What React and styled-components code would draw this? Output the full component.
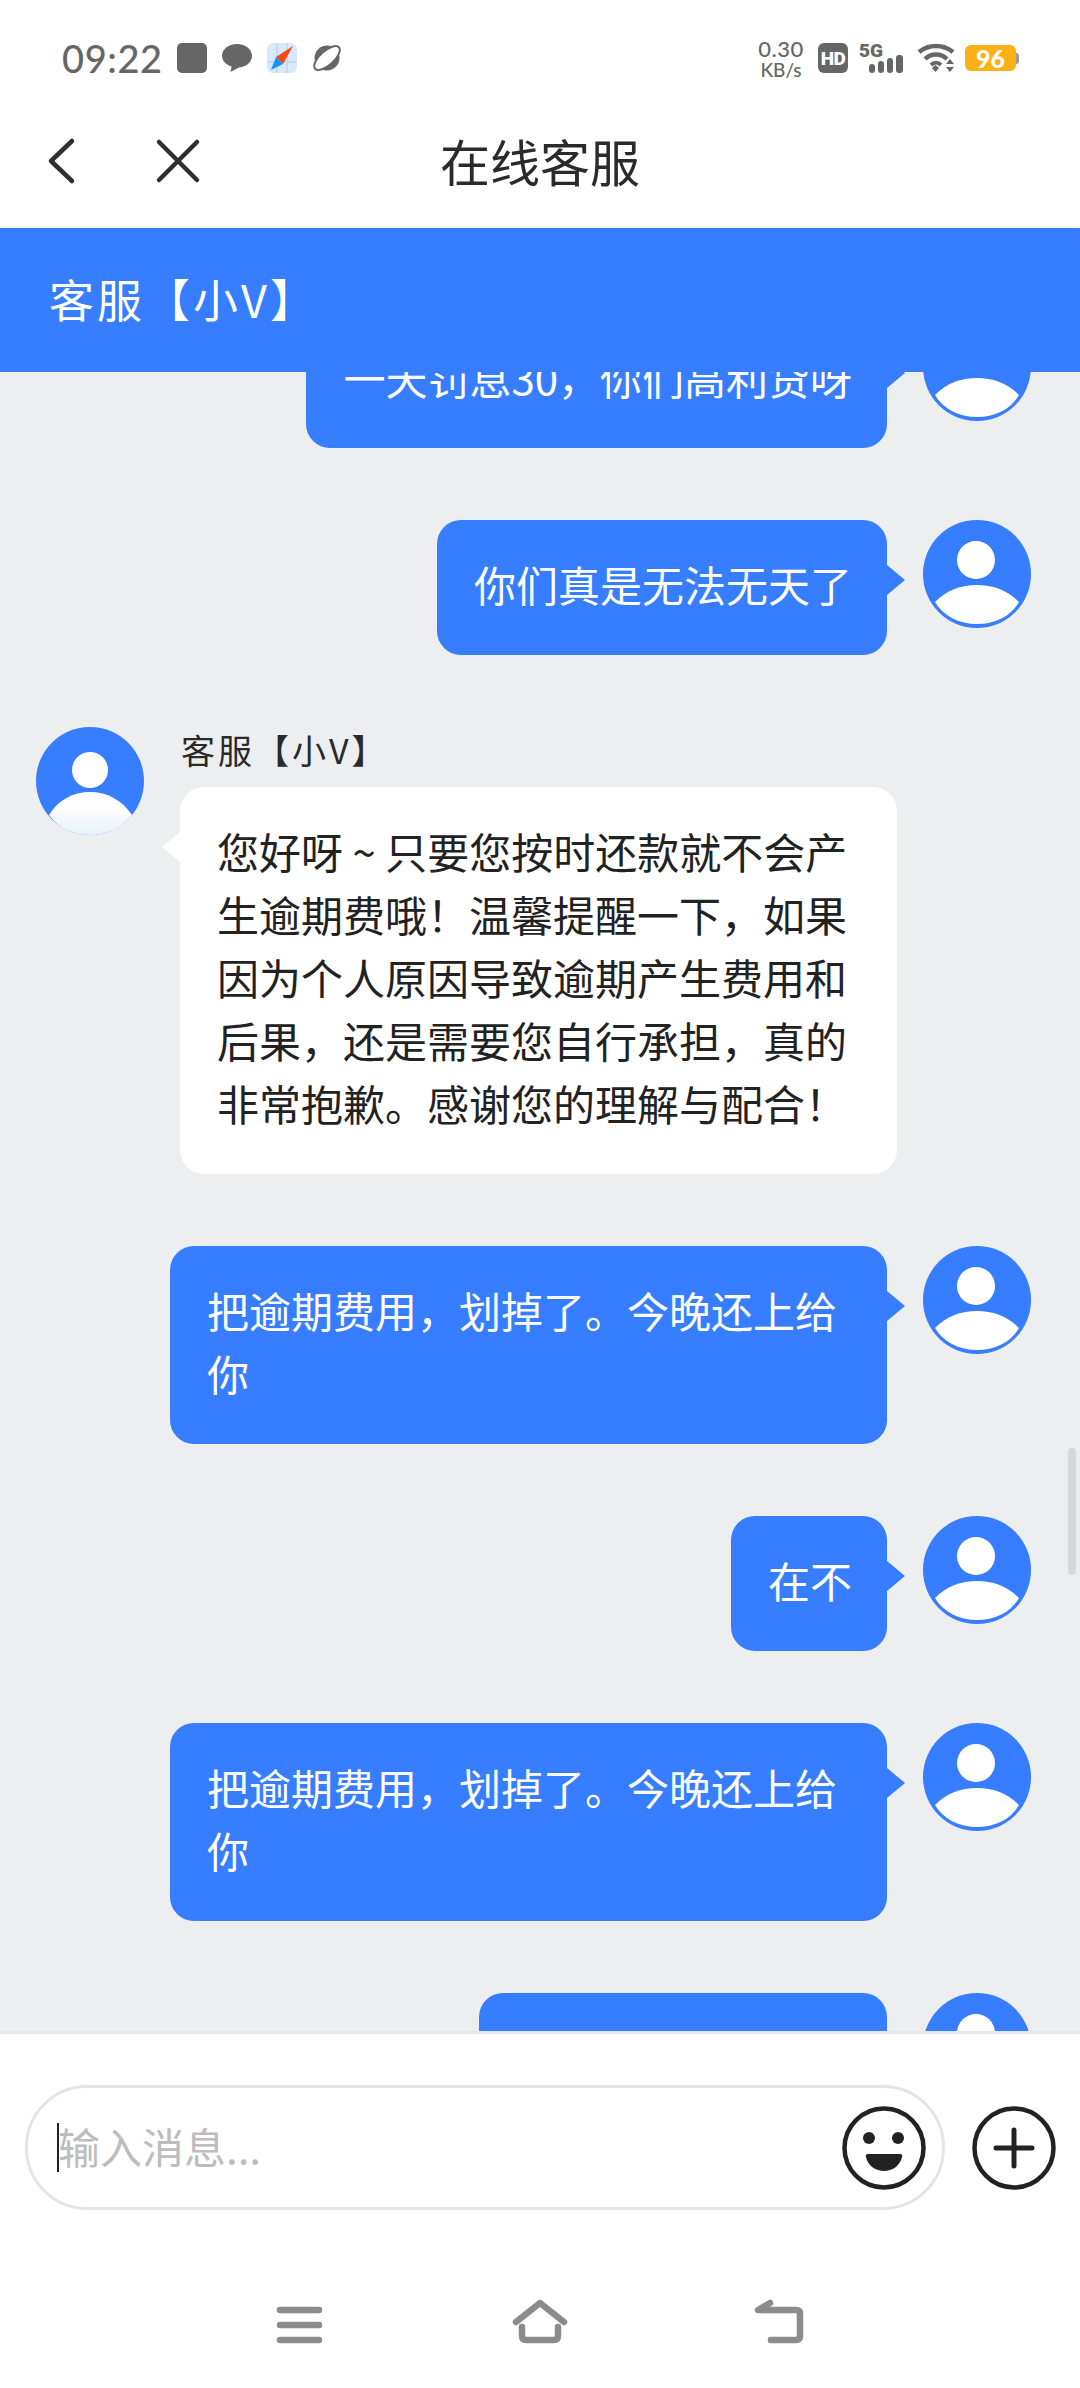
import React from "react";
import styled, { createGlobalStyle } from "styled-components";

const BLUE = "#377dff";
const CHAT_BG = "#edeef0";

const GlobalStyle = createGlobalStyle`
    html, body {
        margin: 0;
        padding: 0;
        background: #ffffff;
    }
    * {
        box-sizing: border-box;
    }
`;

const Page = styled.div`
    width: 1080px;
    height: 2388px;
    display: flex;
    flex-direction: column;
    background: #ffffff;
    overflow: hidden;
    font-family: "Noto Sans CJK SC", "Noto Sans", sans-serif;
    color: #222222;
`;

/* status bar */
const StatusBar = styled.div`
    height: 94px;
    padding: 22px 60px 0 62px;
    display: flex;
    align-items: center;
    justify-content: space-between;
    color: #666666;
`;

const StatusGroup = styled.div`
    display: flex;
    align-items: center;
`;

const Clock = styled.span`
    width: 115px;
    font-family: "Lato", "Roboto", sans-serif;
    font-size: 38px;
    font-weight: 500;
    letter-spacing: 0.6px;
    line-height: 1;
`;

const StatusIcon = styled.svg`
    width: 30px;
    height: 30px;
    margin-right: 15px;
    display: block;
`;

const NetSpeed = styled.div`
    width: 50px;
    margin-right: 12px;
    display: flex;
    flex-direction: column;
    align-items: center;
    font-family: "Lato", "Roboto", sans-serif;
    font-weight: 500;
    line-height: 1;
`;

const SpeedValue = styled.span`
    font-size: 22px;
    letter-spacing: 0.5px;
`;

const SpeedUnit = styled.span`
    font-size: 19px;
`;

const HdBadge = styled.span`
    width: 30px;
    height: 30px;
    margin-right: 11px;
    border-radius: 6px;
    background: #666666;
    color: #ffffff;
    display: flex;
    align-items: center;
    justify-content: center;
    font-family: "Roboto", sans-serif;
    font-size: 19px;
    font-weight: 900;
    letter-spacing: -0.5px;
`;

const Signal = styled.svg`
    width: 46px;
    height: 32px;
    margin-right: 12px;
    display: block;
`;

const Wifi = styled.svg`
    width: 38px;
    height: 30px;
    margin-right: 10px;
    display: block;
`;

const Battery = styled.div`
    position: relative;
    width: 51px;
    height: 26px;
    margin-right: 4px;
    border-radius: 6px;
    background: #fbb116;
    color: #ffffff;
    display: flex;
    align-items: center;
    justify-content: center;
    font-family: "Lato", "Roboto", sans-serif;
    font-size: 25px;
    font-weight: 900;
    line-height: 1;
    &::after {
        content: "";
        position: absolute;
        right: -3px;
        top: 8px;
        width: 3px;
        height: 11px;
        border-radius: 0 3px 3px 0;
        background: #9c9c9c;
    }
`;

/* title bar */
const NavBar = styled.div`
    height: 134px;
    display: grid;
    grid-template-columns: 1fr auto 1fr;
    align-items: center;
`;

const NavActions = styled.div`
    display: flex;
    align-items: center;
    gap: 63px;
    padding-left: 43px;
`;

const NavIcon = styled.svg`
    width: 48px;
    height: 48px;
    display: block;
    fill: none;
    stroke: #2f2f2f;
    stroke-width: 4.5;
    stroke-linecap: round;
    stroke-linejoin: round;
`;

const NavTitle = styled.h1`
    margin: 0;
    padding-bottom: 3px;
    font-size: 50px;
    font-weight: 400;
    line-height: 1;
    color: #2a2a2a;
`;

const ServiceHeader = styled.div`
    height: 144px;
    padding: 0 0 4px 49px;
    background: ${BLUE};
    color: #ffffff;
    display: flex;
    align-items: center;
    font-size: 45px;
    letter-spacing: 3px;
    position: relative;
    z-index: 1;
`;

/* chat */
const ChatArea = styled.div`
    position: relative;
    flex: 1;
    min-height: 0;
    overflow: hidden;
    background: ${CHAT_BG};
`;

const MessageList = styled.div`
    display: flex;
    flex-direction: column;
    gap: 72px;
    margin-top: -59px;
`;

const Row = styled.div`
    display: flex;
    align-items: flex-start;
    gap: 36px;
    justify-content: ${(props) => (props.$mine ? "flex-end" : "flex-start")};
    padding: ${(props) => (props.$mine ? "0 49px 0 0" : "0 0 0 36px")};
`;

const AvatarSvg = styled.svg`
    width: 108px;
    height: 108px;
    flex: none;
    display: block;
`;

const MessageBody = styled.div`
    display: flex;
    flex-direction: column;
`;

const SenderName = styled.div`
    height: 60px;
    padding: 0 0 16px 1px;
    display: flex;
    align-items: center;
    font-size: 34px;
    letter-spacing: 3px;
    color: #2a2a2a;
`;

const Bubble = styled.div`
    position: relative;
    max-width: 717px;
    padding: 32px 35px 40px 37px;
    border-radius: 24px;
    background: ${(props) => (props.$mine ? BLUE : "#ffffff")};
    color: ${(props) => (props.$mine ? "#ffffff" : "#222222")};
    font-size: 42px;
    line-height: 63px;
    &::after {
        content: "";
        position: absolute;
        top: 45px;
        width: 18px;
        height: 30px;
        background: inherit;
        ${(props) =>
            props.$mine
                ? "right: -18px; clip-path: polygon(0 0, 100% 50%, 0 100%);"
                : "left: -18px; clip-path: polygon(100% 0, 0 50%, 100% 100%);"}
    }
`;

const Scrollbar = styled.div`
    position: absolute;
    top: 1076px;
    right: 4px;
    width: 8px;
    height: 127px;
    border-radius: 4px;
    background: #d6d8da;
`;

/* input */
const Composer = styled.div`
    border-top: 3px solid #e5e7ea;
    padding: 51px 24px 0 25px;
    display: flex;
    align-items: center;
    gap: 27px;
`;

const InputPill = styled.div`
    flex: 1;
    height: 125px;
    border: 3px solid #e5e5e5;
    border-radius: 62px;
    padding: 0 16px 0 29px;
    display: flex;
    align-items: center;
`;

const Caret = styled.span`
    width: 2px;
    height: 49px;
    margin-right: -1px;
    flex: none;
    background: #222222;
`;

const MessageInput = styled.input`
    flex: 1;
    min-width: 0;
    border: 0;
    outline: 0;
    padding: 0 0 5px;
    background: transparent;
    font-family: inherit;
    font-size: 42px;
    color: #222222;
    &::placeholder {
        color: #bdbdbd;
        opacity: 1;
    }
`;

const RoundIcon = styled.svg`
    width: 84px;
    height: 84px;
    flex: none;
    display: block;
`;

const SystemNav = styled.div`
    padding: 88px 0 42px;
    display: flex;
    justify-content: center;
    gap: 180px;
`;

const SystemIcon = styled.svg`
    width: 60px;
    height: 48px;
    display: block;
    fill: none;
    stroke: #8c8c8c;
    stroke-width: 6.5;
    stroke-linecap: round;
    stroke-linejoin: round;
`;

function Avatar({ service }) {
    if (service) {
        return (
            <AvatarSvg viewBox="0 0 108 108">
                <defs>
                    <linearGradient id="serviceBody" x1="0" y1="0" x2="0" y2="1">
                        <stop offset="0.3" stopColor="#ffffff" />
                        <stop offset="1" stopColor="#e9f0fb" />
                    </linearGradient>
                </defs>
                <circle cx="54" cy="54" r="54" fill={BLUE} />
                <circle cx="54" cy="43" r="18" fill="#ffffff" />
                <path d="M13 88 C22 73 37 65 54 65 C71 65 86 73 96 88 C86 101 71 108 54 108 C37 108 22 101 13 88Z" fill="url(#serviceBody)" />
            </AvatarSvg>
        );
    }
    return (
        <AvatarSvg viewBox="0 0 108 108">
            <circle cx="54" cy="54" r="54" fill={BLUE} />
            <circle cx="53" cy="40" r="19" fill="#ffffff" />
            <path d="M12 82 C24 70 38 65 54 65 C70 65 84 70 96 82 C88 96 72 104 54 104 C36 104 20 96 12 82Z" fill="#ffffff" />
        </AvatarSvg>
    );
}

function Message({ text }) {
    return (
        <Row $mine>
            <Bubble $mine>{text}</Bubble>
            <Avatar />
        </Row>
    );
}

function App() {
    return (
        <Page>
            <GlobalStyle />
            <StatusBar>
                <StatusGroup>
                    <Clock>09:22</Clock>
                    <StatusIcon viewBox="0 0 30 30">
                        <rect width="30" height="30" rx="5" fill="#666666" />
                    </StatusIcon>
                    <StatusIcon viewBox="0 0 30 30">
                        <path d="M15 1 C23.5 1 30 6.2 30 12.8 C30 19 24.5 24 17 24.4 L8.5 29 L9.6 23.6 C4 21.8 0 17.8 0 12.8 C0 6.2 6.5 1 15 1Z" fill="#666666" />
                    </StatusIcon>
                    <StatusIcon viewBox="0 0 30 30">
                        <rect width="30" height="30" rx="6" fill="#d9e9fb" />
                        <path d="M0 19 H30 M10 0 V30 M20 0 V30" stroke="#bcd6f5" strokeWidth="1.5" />
                        <path d="M26 3 L16 21 L9 14Z" fill="#f9480f" />
                        <path d="M4 27 L9 14 L16 21Z" fill="#1495f6" />
                    </StatusIcon>
                    <StatusIcon viewBox="0 0 30 30">
                        <circle cx="15" cy="15" r="12.5" fill="#666666" />
                        <ellipse cx="15" cy="15" rx="16" ry="7" transform="rotate(-42 15 15)" fill="#ffffff" stroke="#666666" strokeWidth="2" />
                    </StatusIcon>
                </StatusGroup>
                <StatusGroup>
                    <NetSpeed>
                        <SpeedValue>0.30</SpeedValue>
                        <SpeedUnit>KB/s</SpeedUnit>
                    </NetSpeed>
                    <HdBadge>HD</HdBadge>
                    <Signal viewBox="0 0 46 32">
                        <text x="0" y="15" fontFamily="Roboto, sans-serif" fontSize="19" fontWeight="900" fill="#666666">5G</text>
                        <rect x="10" y="22" width="6" height="9" rx="3" fill="#666666" />
                        <rect x="19" y="19" width="6" height="12" rx="3" fill="#666666" />
                        <rect x="28" y="16" width="6" height="15" rx="3" fill="#666666" />
                        <rect x="37" y="13" width="7" height="18" rx="3" fill="#666666" />
                    </Signal>
                    <Wifi viewBox="0 0 38 30">
                        <path d="M2 9 C12 1 26 1 36 9" fill="none" stroke="#666666" strokeWidth="4.5" />
                        <path d="M8 16 C14 10 24 10 30 16" fill="none" stroke="#666666" strokeWidth="4.5" />
                        <path d="M14 22 C17 19 21 19 24 22" fill="none" stroke="#666666" strokeWidth="4" />
                        <path d="M15 25 L18.5 22 L22 25 L18.5 29Z" fill="#666666" />
                        <path d="M33 16 L37 21 H29Z M29 24 H37 L33 29Z" fill="#666666" />
                    </Wifi>
                    <Battery>96</Battery>
                </StatusGroup>
            </StatusBar>

            <NavBar>
                <NavActions>
                    <NavIcon viewBox="0 0 48 48">
                        <path d="M29 4 L8 24 L29 44" />
                    </NavIcon>
                    <NavIcon viewBox="0 0 48 48">
                        <path d="M5 5 L43 43 M43 5 L5 43" />
                    </NavIcon>
                </NavActions>
                <NavTitle>在线客服</NavTitle>
                <span />
            </NavBar>

            <ServiceHeader>客服【小V】</ServiceHeader>

            <ChatArea>
                <MessageList>
                    <Message text="一天罚息30，你们高利贷呀" />
                    <Message text="你们真是无法无天了" />
                    <Row>
                        <Avatar service />
                        <MessageBody>
                            <SenderName>客服【小V】</SenderName>
                            <Bubble>您好呀 ~ 只要您按时还款就不会产生逾期费哦！温馨提醒一下，如果因为个人原因导致逾期产生费用和后果，还是需要您自行承担，真的非常抱歉。感谢您的理解与配合！</Bubble>
                        </MessageBody>
                    </Row>
                    <Message text="把逾期费用，划掉了。今晚还上给你" />
                    <Message text="在不" />
                    <Message text="把逾期费用，划掉了。今晚还上给你" />
                    <Message text="把逾期费用划掉了" />
                </MessageList>
                <Scrollbar />
            </ChatArea>

            <Composer>
                <InputPill>
                    <Caret />
                    <MessageInput placeholder="输入消息..." />
                    <RoundIcon viewBox="0 0 84 84">
                        <circle cx="42" cy="42" r="39.5" fill="none" stroke="#222222" strokeWidth="4.5" />
                        <circle cx="27" cy="32" r="6" fill="#222222" />
                        <circle cx="56" cy="32" r="6" fill="#222222" />
                        <path d="M26 48 H58 Q61 48 60 51 C58 60 50 65 42 65 C34 65 26 60 24 51 Q23 48 26 48Z" fill="#222222" />
                    </RoundIcon>
                </InputPill>
                <RoundIcon viewBox="0 0 84 84">
                    <circle cx="42" cy="42" r="39.5" fill="none" stroke="#222222" strokeWidth="4.5" />
                    <path d="M24 42 H60 M42 24 V60" fill="none" stroke="#222222" strokeWidth="5" strokeLinecap="round" />
                </RoundIcon>
            </Composer>

            <SystemNav>
                <SystemIcon viewBox="0 0 60 48">
                    <path d="M10 12 H49 M10 27 H49 M10 42 H49" />
                </SystemIcon>
                <SystemIcon viewBox="0 0 60 48">
                    <path d="M6 24 L30 5 L54 24" />
                    <path d="M12 29 V38 Q12 42 16 42 H44 Q48 42 48 38 V29" />
                </SystemIcon>
                <SystemIcon viewBox="0 0 60 48">
                    <path d="M20 5 L8 12 H46 Q50 12 50 16 V38 Q50 42 46 42 H21" />
                </SystemIcon>
            </SystemNav>
        </Page>
    );
}

export default App;
